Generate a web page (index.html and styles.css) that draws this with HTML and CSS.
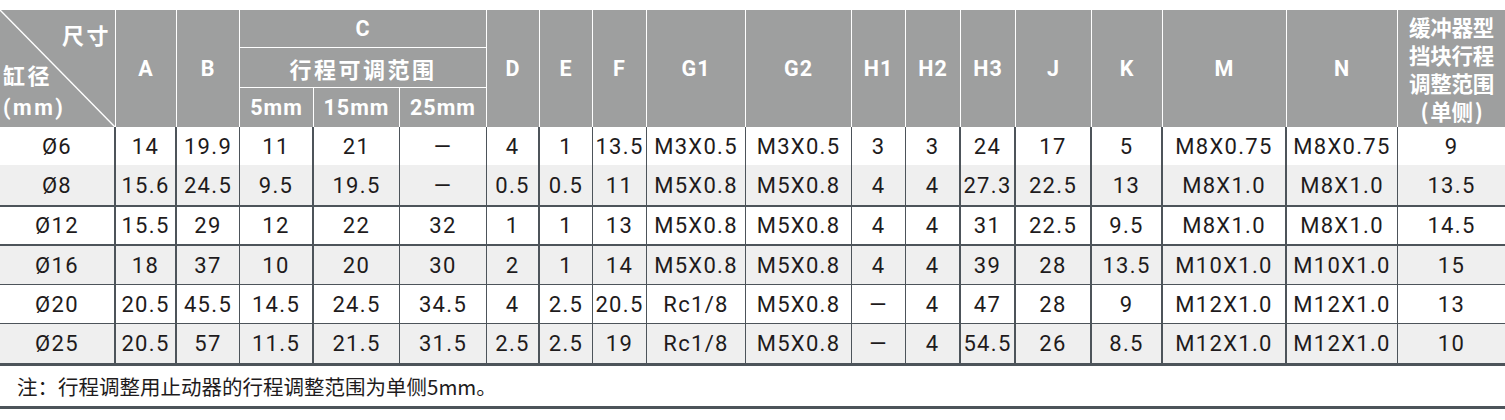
FILE: index.html
```html
<!DOCTYPE html>
<html lang="zh-CN">
<head>
<meta charset="utf-8">
<title>缸径尺寸表</title>
<link rel="stylesheet" href="styles.css">
</head>
<body>
<div class="sheet">
<table class="spec">
  <colgroup>
    <col class="w116"><col class="w61"><col class="w63"><col class="w74"><col class="w86"><col class="w87">
    <col class="w53"><col class="w53"><col class="w54"><col class="w99"><col class="w106">
    <col class="w54"><col class="w55"><col class="w55"><col class="w76"><col class="w71">
    <col class="w124"><col class="w111"><col class="w107">
  </colgroup>
  <thead>
    <tr class="h1">
      <th rowspan="3" class="corner">
        <svg class="diag" viewBox="0 0 100 100" preserveAspectRatio="none"><line x1="0" y1="0" x2="100" y2="100" stroke="#fff" stroke-width="1.4" vector-effect="non-scaling-stroke"/></svg>
        <div class="corner-text">
          <div class="c-top">尺寸</div>
          <div class="c-mid">缸径</div>
          <div class="c-bot">(mm)</div>
        </div>
      </th>
      <th rowspan="3">A</th>
      <th rowspan="3">B</th>
      <th colspan="3" class="hb">C</th>
      <th rowspan="3">D</th>
      <th rowspan="3">E</th>
      <th rowspan="3">F</th>
      <th rowspan="3">G1</th>
      <th rowspan="3">G2</th>
      <th rowspan="3">H1</th>
      <th rowspan="3">H2</th>
      <th rowspan="3">H3</th>
      <th rowspan="3">J</th>
      <th rowspan="3">K</th>
      <th rowspan="3">M</th>
      <th rowspan="3">N</th>
      <th rowspan="3" class="last">
        <div class="cjk4">
          <span class="cl">缓冲器型</span>
          <span class="cl">挡块行程</span>
          <span class="cl">调整范围</span>
          <span class="cl pl"><span class="po">(</span><span>单侧</span><span class="pc">)</span></span>
        </div>
      </th>
    </tr>
    <tr class="h2">
      <th colspan="3" class="hb cjk">行程可调范围</th>
    </tr>
    <tr class="h3">
      <th>5mm</th>
      <th>15mm</th>
      <th>25mm</th>
    </tr>
  </thead>
  <tbody>
    <tr class="r1">
      <td>Ø6</td><td>14</td><td>19.9</td><td>11</td><td>21</td><td>—</td><td>4</td><td>1</td><td>13.5</td><td>M3X0.5</td><td>M3X0.5</td><td>3</td><td>3</td><td>24</td><td>17</td><td>5</td><td>M8X0.75</td><td>M8X0.75</td><td>9</td>
    </tr>
    <tr class="alt r2">
      <td>Ø8</td><td>15.6</td><td>24.5</td><td>9.5</td><td>19.5</td><td>—</td><td>0.5</td><td>0.5</td><td>11</td><td>M5X0.8</td><td>M5X0.8</td><td>4</td><td>4</td><td>27.3</td><td>22.5</td><td>13</td><td>M8X1.0</td><td>M8X1.0</td><td>13.5</td>
    </tr>
    <tr class="thick r3">
      <td>Ø12</td><td>15.5</td><td>29</td><td>12</td><td>22</td><td>32</td><td>1</td><td>1</td><td>13</td><td>M5X0.8</td><td>M5X0.8</td><td>4</td><td>4</td><td>31</td><td>22.5</td><td>9.5</td><td>M8X1.0</td><td>M8X1.0</td><td>14.5</td>
    </tr>
    <tr class="alt thick r4">
      <td>Ø16</td><td>18</td><td>37</td><td>10</td><td>20</td><td>30</td><td>2</td><td>1</td><td>14</td><td>M5X0.8</td><td>M5X0.8</td><td>4</td><td>4</td><td>39</td><td>28</td><td>13.5</td><td>M10X1.0</td><td>M10X1.0</td><td>15</td>
    </tr>
    <tr class="thin r5">
      <td>Ø20</td><td>20.5</td><td>45.5</td><td>14.5</td><td>24.5</td><td>34.5</td><td>4</td><td>2.5</td><td>20.5</td><td>Rc1/8</td><td>M5X0.8</td><td>—</td><td>4</td><td>47</td><td>28</td><td>9</td><td>M12X1.0</td><td>M12X1.0</td><td>13</td>
    </tr>
    <tr class="alt thin r6">
      <td>Ø25</td><td>20.5</td><td>57</td><td>11.5</td><td>21.5</td><td>31.5</td><td>2.5</td><td>2.5</td><td>19</td><td>Rc1/8</td><td>M5X0.8</td><td>—</td><td>4</td><td>54.5</td><td>26</td><td>8.5</td><td>M12X1.0</td><td>M12X1.0</td><td>10</td>
    </tr>
  </tbody>
</table>
<div class="note">注：行程调整用止动器的行程调整范围为单侧5mm。</div>
</div>
</body>
</html>
```

FILE: styles.css
```css
html, body {
  margin: 0;
  padding: 0;
  background: #ffffff;
}

.sheet {
  padding-top: 10px;
  width: 1505px;
}

.spec {
  border-collapse: separate;
  border-spacing: 0;
  table-layout: fixed;
  width: 1505px;
  font-family: Roboto, "Noto Sans CJK SC", sans-serif;
}

.w116 { width: 116px; }
.w61 { width: 61px; }
.w63 { width: 63px; }
.w74 { width: 74px; }
.w86 { width: 86px; }
.w87 { width: 87px; }
.w53 { width: 53px; }
.w54 { width: 54px; }
.w55 { width: 55px; }
.w99 { width: 99px; }
.w106 { width: 106px; }
.w76 { width: 76px; }
.w71 { width: 71px; }
.w124 { width: 124px; }
.w111 { width: 111px; }
.w107 { width: 107px; }

.spec th {
  background: #9e9f9f;
  color: #ffffff;
  font-weight: 700;
  font-size: 21.5px;
  letter-spacing: 1px;
  text-align: center;
  vertical-align: middle;
  padding: 0;
  border-right: 1px solid #ffffff;
  white-space: nowrap;
  overflow: hidden;
}

.spec th.last {
  border-right: none;
}

.spec th.hb {
  border-bottom: 1px solid #ffffff;
}

.spec tr.h1 { height: 38px; }
.spec tr.h2 { height: 40px; }
.spec tr.h3 { height: 39px; }

.spec th.cjk {
  font-family: "Noto Sans CJK SC", sans-serif;
  font-size: 22px;
  letter-spacing: 2.5px;
}

.cjk4 {
  display: flex;
  flex-direction: column;
  align-items: center;
  font-family: "Noto Sans CJK SC", sans-serif;
  font-size: 21.5px;
  letter-spacing: -0.3px;
}

.cl {
  display: block;
  height: 28px;
  line-height: 28px;
}

.cl.pl {
  display: flex;
}

.po {
  display: block;
  width: 21px;
  text-align: right;
  padding-right: 2px;
}

.pc {
  display: block;
  width: 21px;
  text-align: left;
  padding-left: 2px;
}

.spec th.corner {
  position: relative;
  vertical-align: top;
  text-align: left;
}

.diag {
  position: absolute;
  left: 0;
  top: 0;
  width: 100%;
  height: 100%;
}

.corner-text {
  display: flex;
  flex-direction: column;
  padding-top: 4px;
  font-family: "Noto Sans CJK SC", sans-serif;
  font-size: 22px;
  letter-spacing: 2.5px;
}

.c-top {
  height: 40px;
  line-height: 40px;
  text-align: right;
  padding-right: 4px;
}

.c-mid {
  height: 40px;
  line-height: 40px;
  padding-left: 3px;
}

.c-bot {
  height: 28px;
  line-height: 28px;
  padding-left: 3px;
  font-family: Roboto, sans-serif;
  font-size: 21.5px;
}

.spec td {
  font-size: 22px;
  letter-spacing: 1.3px;
  color: #1e1b1c;
  text-align: center;
  vertical-align: middle;
  padding: 0;
  white-space: nowrap;
  border-right: 1px solid #4d545a;
  background: #ffffff;
}

.spec td:nth-child(1),
.spec td:nth-child(2),
.spec td:nth-child(4),
.spec td:nth-child(7),
.spec td:nth-child(13),
.spec td:nth-child(14),
.spec td:nth-child(15),
.spec td:nth-child(16),
.spec td:nth-child(17) {
  border-right-width: 2px;
}

.spec td:last-child {
  border-right: none;
}

.spec tr.alt td {
  background: #efefef;
}

.spec tr.thick td {
  border-top: 2px solid #4d545a;
}

.spec tr.thin td {
  border-top: 1px solid #4d545a;
}

.spec tr.r1 { height: 38px; }
.spec tr.r2 { height: 40px; }
.spec tr.r3 { height: 39px; }
.spec tr.r4 { height: 40px; }
.spec tr.r5 { height: 39px; }
.spec tr.r6 { height: 40px; }

.note {
  border-top: 3px solid #4d545a;
  border-bottom: 3px solid #4d545a;
  height: 40px;
  line-height: 40px;
  padding-left: 17px;
  font-family: "Noto Sans CJK SC", sans-serif;
  font-size: 20.5px;
  color: #1e1b1c;
}
```
